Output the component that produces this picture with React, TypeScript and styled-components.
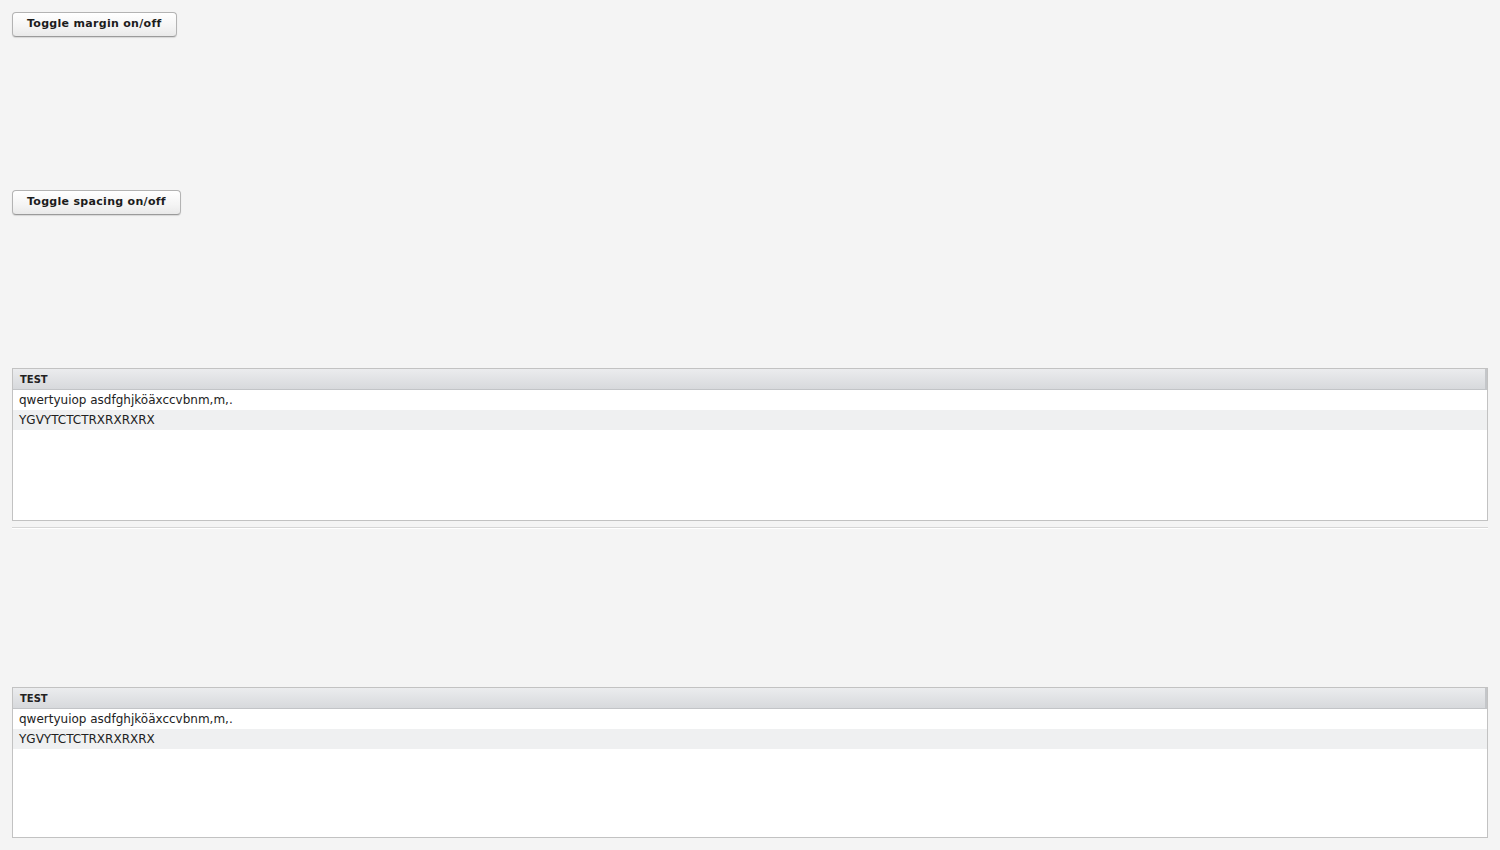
import React from 'react';
import styled, { createGlobalStyle } from 'styled-components';

const rows = ['qwertyuiop asdfghjköäxccvbnm,m,.', 'YGVYTCTCTRXRXRXRX'];

export function App() {
    return (
        <>
            <GlobalStyle />
            <Page>
                <ButtonSlot>
                    <Button>Toggle margin on/off</Button>
                </ButtonSlot>
                <ButtonSlot>
                    <Button>Toggle spacing on/off</Button>
                </ButtonSlot>
                <DataTable rows={rows} height={153} />
                <Separator />
                <Spacer />
                <DataTable rows={rows} height={151} />
            </Page>
        </>
    );
}

function DataTable({ rows, height }: { rows: string[]; height: number }) {
    return (
        <Table $height={height}>
            <Header>TEST</Header>
            <Body>
                {rows.map((row, index) => (
                    <Row key={index} $odd={index % 2 === 1}>
                        {row}
                    </Row>
                ))}
            </Body>
        </Table>
    );
}

export default App;

const GlobalStyle = createGlobalStyle`
    html, body {
        margin: 0;
        padding: 0;
        background: #f4f4f4;
        font-family: "DejaVu Sans", Verdana, sans-serif;
    }
`;

const Page = styled.div`
    display: flex;
    flex-direction: column;
    padding: 12px;
    height: 850px;
    box-sizing: border-box;
`;

const ButtonSlot = styled.div`
    height: 178px;
    display: flex;
    align-items: flex-start;
`;

const Button = styled.button`
    height: 25px;
    padding: 0 14px 3px;
    border: 1px solid #b3b3b3;
    border-bottom-color: #9a9a9a;
    border-radius: 4px;
    background: linear-gradient(#ffffff, #f4f4f4 60%, #e9e9e9);
    box-shadow: 0 1px 1px rgba(0, 0, 0, 0.12), inset 0 1px 0 #ffffff;
    font-family: "DejaVu Sans", Verdana, sans-serif;
    font-size: 11px;
    font-weight: bold;
    letter-spacing: 0.3px;
    color: #1c1c1c;
    cursor: pointer;
`;

const Table = styled.div<{ $height: number }>`
    height: ${(p) => p.$height}px;
    flex-shrink: 0;
    box-sizing: border-box;
    border: 1px solid #c2c2c2;
    background: #ffffff;
    display: flex;
    flex-direction: column;
`;

const Header = styled.div`
    height: 21px;
    box-sizing: border-box;
    padding: 0 7px;
    display: flex;
    align-items: center;
    background: linear-gradient(#ebecee, #d7d9dc);
    border-bottom: 1px solid #c2c4c7;
    border-right: 2px solid #c4c6c9;
    font-size: 10px;
    font-weight: bold;
    color: #222;
`;

const Body = styled.div`
    flex: 1;
    background: #ffffff;
`;

const Row = styled.div<{ $odd: boolean }>`
    height: 20px;
    padding: 0 6px;
    display: flex;
    align-items: center;
    font-size: 12px;
    color: #222;
    background: ${(p) => (p.$odd ? '#eff0f1' : '#ffffff')};
`;

const Separator = styled.div`
    margin-top: 6px;
    height: 1px;
    flex-shrink: 0;
    background: #d6d6d6;
    border-bottom: 1px solid #ffffff;
`;

const Spacer = styled.div`
    height: 158px;
    flex-shrink: 0;
`;
